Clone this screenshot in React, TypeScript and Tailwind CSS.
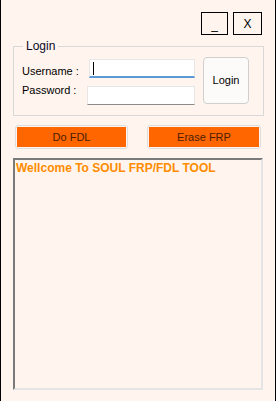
const font = "font-['Liberation_Sans',Arial,sans-serif]";

const OrangeButton = ({ label, className }: { label: string; className?: string }) => (
  <div className={`h-[24px] rounded-[3px] border border-[#dedede] p-[1px] ${className ?? ""}`}>
    <div className="flex h-full items-center justify-center bg-[#ff6600] text-[11px] text-[#4a1d00]">
      {label}
    </div>
  </div>
);

const App = () => {
  return (
    <div className={`w-[276px] h-[401px] bg-[#fff5ee] border-x border-black ${font} text-black`}>
      <div className="flex justify-end gap-[5px] pt-[12px] pr-[13px]">
        <button className="flex h-[23px] w-[27px] items-end justify-center border border-black pb-[3px] text-[12px] leading-none">
          _
        </button>
        <button className="flex h-[23px] w-[29px] items-center justify-center border border-black text-[12px] leading-none">
          X
        </button>
      </div>

      <fieldset className="ml-[12px] mt-[4px] w-[251px] border border-[#d8d8d8] px-0 pb-[10px] pt-[4px]">
        <legend className="ml-[9px] px-[3px] text-[12px] leading-[14px] text-[#0a0a2a]">Login</legend>
        <div className="flex items-start pl-[8px]">
          <div className="flex flex-col gap-[8px] pt-[2px]">
            <div className="flex items-start">
              <span className="mt-[6px] w-[67px] text-[11px] leading-[13px]">Username :</span>
              <div className="flex h-[19px] w-[106px] items-center border border-[#e6e6e6] border-b-2 border-b-[#5b9bd5] bg-white pl-[3px]">
                <div className="h-[13px] w-px bg-black" />
              </div>
            </div>
            <div className="flex items-start">
              <span className="-mt-[2px] w-[65px] text-[11px] leading-[13px]">Password :</span>
              <div className="h-[19px] w-[108px] border border-[#e6e6e6] border-b-[#8a8a8a] bg-white" />
            </div>
          </div>
          <button className="ml-[8px] flex h-[47px] w-[46px] items-center justify-center rounded-[4px] border border-[#cfcfcf] bg-[#fdfbfa] text-[11px]">
            Login
          </button>
        </div>
      </fieldset>

      <div className="ml-[14px] mt-[9px] flex">
        <OrangeButton label="Do FDL" className="w-[113px]" />
        <OrangeButton label="Erase FRP" className="ml-[19px] w-[114px]" />
      </div>

      <div className="ml-[12px] mt-[9px] h-[232px] w-[250px] border-2 border-t-[#7a7a7a] border-l-[#7a7a7a] border-r-[#e4e4e4] border-b-[#e4e4e4] px-[1px] pt-[1px]">
        <p className="text-[12px] font-bold leading-[14px] text-[#ff8c00]">Wellcome To SOUL FRP/FDL TOOL</p>
      </div>
    </div>
  );
};

export default App;
